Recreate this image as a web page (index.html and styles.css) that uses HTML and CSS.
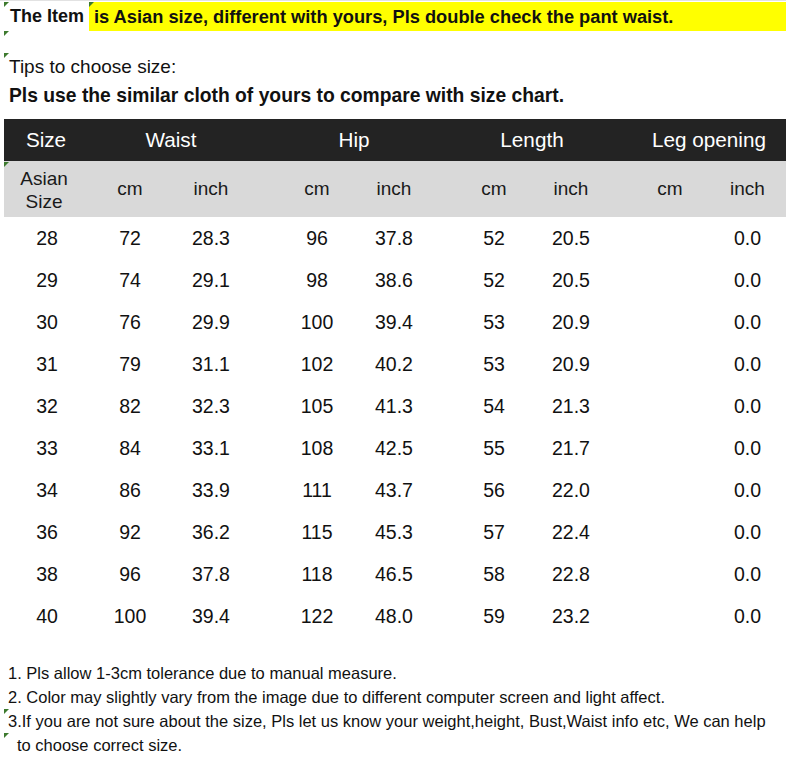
FILE: index.html
```html
<!DOCTYPE html>
<html>
<head>
<meta charset="utf-8">
<link rel="stylesheet" href="styles.css">
</head>
<body>
<div class="page">
  <span class="marker m1"></span>
  <span class="marker m2"></span>
  <span class="marker m3"></span>
  <span class="marker m4"></span>
  <span class="marker m5"></span>
  <span class="marker m6"></span>
  <span class="marker m7"></span>

  <div class="topline">
    <div class="item-label">The Item</div>
    <div class="highlight">is Asian size, different with yours, Pls double check the pant waist.</div>
  </div>

  <p class="tips">Tips to choose size:</p>
  <p class="advice">Pls use the similar cloth of yours to compare with size chart.</p>

  <div class="chart">
    <div class="row head">
      <div class="h-size">Size</div>
      <div class="h-waist">Waist</div>
      <div class="h-hip">Hip</div>
      <div class="h-length">Length</div>
      <div class="h-leg">Leg opening</div>
    </div>
    <div class="row sub">
      <div class="asian">Asian<br>Size</div>
      <div>cm</div><div>inch</div>
      <div>cm</div><div>inch</div>
      <div>cm</div><div>inch</div>
      <div>cm</div><div>inch</div>
    </div>
    <div class="row data"><div>28</div><div>72</div><div>28.3</div><div>96</div><div>37.8</div><div>52</div><div>20.5</div><div></div><div>0.0</div></div>
    <div class="row data"><div>29</div><div>74</div><div>29.1</div><div>98</div><div>38.6</div><div>52</div><div>20.5</div><div></div><div>0.0</div></div>
    <div class="row data"><div>30</div><div>76</div><div>29.9</div><div>100</div><div>39.4</div><div>53</div><div>20.9</div><div></div><div>0.0</div></div>
    <div class="row data"><div>31</div><div>79</div><div>31.1</div><div>102</div><div>40.2</div><div>53</div><div>20.9</div><div></div><div>0.0</div></div>
    <div class="row data"><div>32</div><div>82</div><div>32.3</div><div>105</div><div>41.3</div><div>54</div><div>21.3</div><div></div><div>0.0</div></div>
    <div class="row data"><div>33</div><div>84</div><div>33.1</div><div>108</div><div>42.5</div><div>55</div><div>21.7</div><div></div><div>0.0</div></div>
    <div class="row data"><div>34</div><div>86</div><div>33.9</div><div>111</div><div>43.7</div><div>56</div><div>22.0</div><div></div><div>0.0</div></div>
    <div class="row data"><div>36</div><div>92</div><div>36.2</div><div>115</div><div>45.3</div><div>57</div><div>22.4</div><div></div><div>0.0</div></div>
    <div class="row data"><div>38</div><div>96</div><div>37.8</div><div>118</div><div>46.5</div><div>58</div><div>22.8</div><div></div><div>0.0</div></div>
    <div class="row data"><div>40</div><div>100</div><div>39.4</div><div>122</div><div>48.0</div><div>59</div><div>23.2</div><div></div><div>0.0</div></div>
  </div>

  <div class="notes">
    <p>1. Pls allow 1-3cm tolerance due to manual measure.</p>
    <p>2. Color may slightly vary from the image due to different computer screen and light affect.</p>
    <p>3.If you are not sure about the size, Pls let us know your weight,height, Bust,Waist info etc, We can help</p>
    <p class="indent">to choose correct size.</p>
  </div>
</div>
</body>
</html>
```

FILE: styles.css
```css
html, body {
  margin: 0;
  padding: 0;
  background: #ffffff;
}

body {
  font-family: "Liberation Sans", Arial, sans-serif;
  color: #111111;
}

.page {
  position: relative;
  width: 794px;
  height: 768px;
  overflow: hidden;
}

.page > p {
  margin: 0;
}

/* Excel comment markers */
.marker {
  position: absolute;
  width: 0;
  height: 0;
  border-top: 5px solid #3d7a2e;
  border-right: 5px solid transparent;
}
.m1 { left: 4px; top: 2px; }
.m2 { left: 89px; top: 2px; }
.m3 { left: 4px; top: 31px; }
.m4 { left: 4px; top: 53px; }
.m5 { left: 4px; top: 162px; }
.m6 { left: 4px; top: 709px; }
.m7 { left: 4px; top: 733px; }

.topline {
  width: 786px;
  border-top: 1px solid #e2e2e2;
  padding-top: 1px;
  display: flex;
  font-weight: bold;
  font-size: 18px;
}

.item-label {
  width: 79px;
  padding-left: 10px;
  height: 29px;
  line-height: 29px;
}

.highlight {
  flex: 1;
  background: #ffff00;
  height: 29px;
  line-height: 29px;
  padding-left: 5px;
  font-size: 18.25px;
}

.tips {
  font-size: 19px;
  line-height: 22px;
  padding: 25px 0 0 9px;
}

.advice {
  font-size: 19.3px;
  font-weight: bold;
  line-height: 22px;
  padding: 7px 0 0 9px;
}

.chart {
  margin: 12px 0 0 4px;
  width: 782px;
}

.row {
  display: grid;
  grid-template-columns: 84px 82px 94px 91px 89px 88px 88px 89px 77px;
  text-align: center;
}

.head {
  background: #232323;
  color: #ffffff;
  height: 42px;
  line-height: 42px;
  font-size: 20.7px;
}
.h-waist { grid-column: span 2; padding-right: 10px; }
.h-hip { grid-column: span 2; }
.h-length { grid-column: span 2; }
.h-leg { grid-column: span 2; padding-left: 12px; }

.sub {
  background: #d9d9d9;
  height: 56px;
  align-items: center;
  font-size: 19px;
  color: #1a1a1a;
}
.asian {
  line-height: 23px;
  padding-top: 2px;
}

.data {
  height: 42px;
  line-height: 42px;
  font-size: 19.5px;
}

.sub > :nth-child(1) { padding-right: 4px; }
.data > :nth-child(1) { padding-left: 2px; }
.sub > :nth-child(2), .data > :nth-child(2) { padding-left: 2px; }
.sub > :nth-child(3), .data > :nth-child(3) { padding-right: 12px; }
.sub > :nth-child(4), .data > :nth-child(4) { padding-left: 15px; }
.sub > :nth-child(5), .data > :nth-child(5) { padding-right: 11px; }
.sub > :nth-child(6), .data > :nth-child(6) { padding-left: 12px; }
.sub > :nth-child(7), .data > :nth-child(7) { padding-right: 10px; }
.sub > :nth-child(8), .data > :nth-child(8) { padding-left: 11px; }

.notes {
  margin-top: 24px;
  padding-left: 8px;
  font-size: 16.5px;
  line-height: 24px;
}
.notes p {
  margin: 0;
}
.notes .indent {
  padding-left: 9px;
}
```
